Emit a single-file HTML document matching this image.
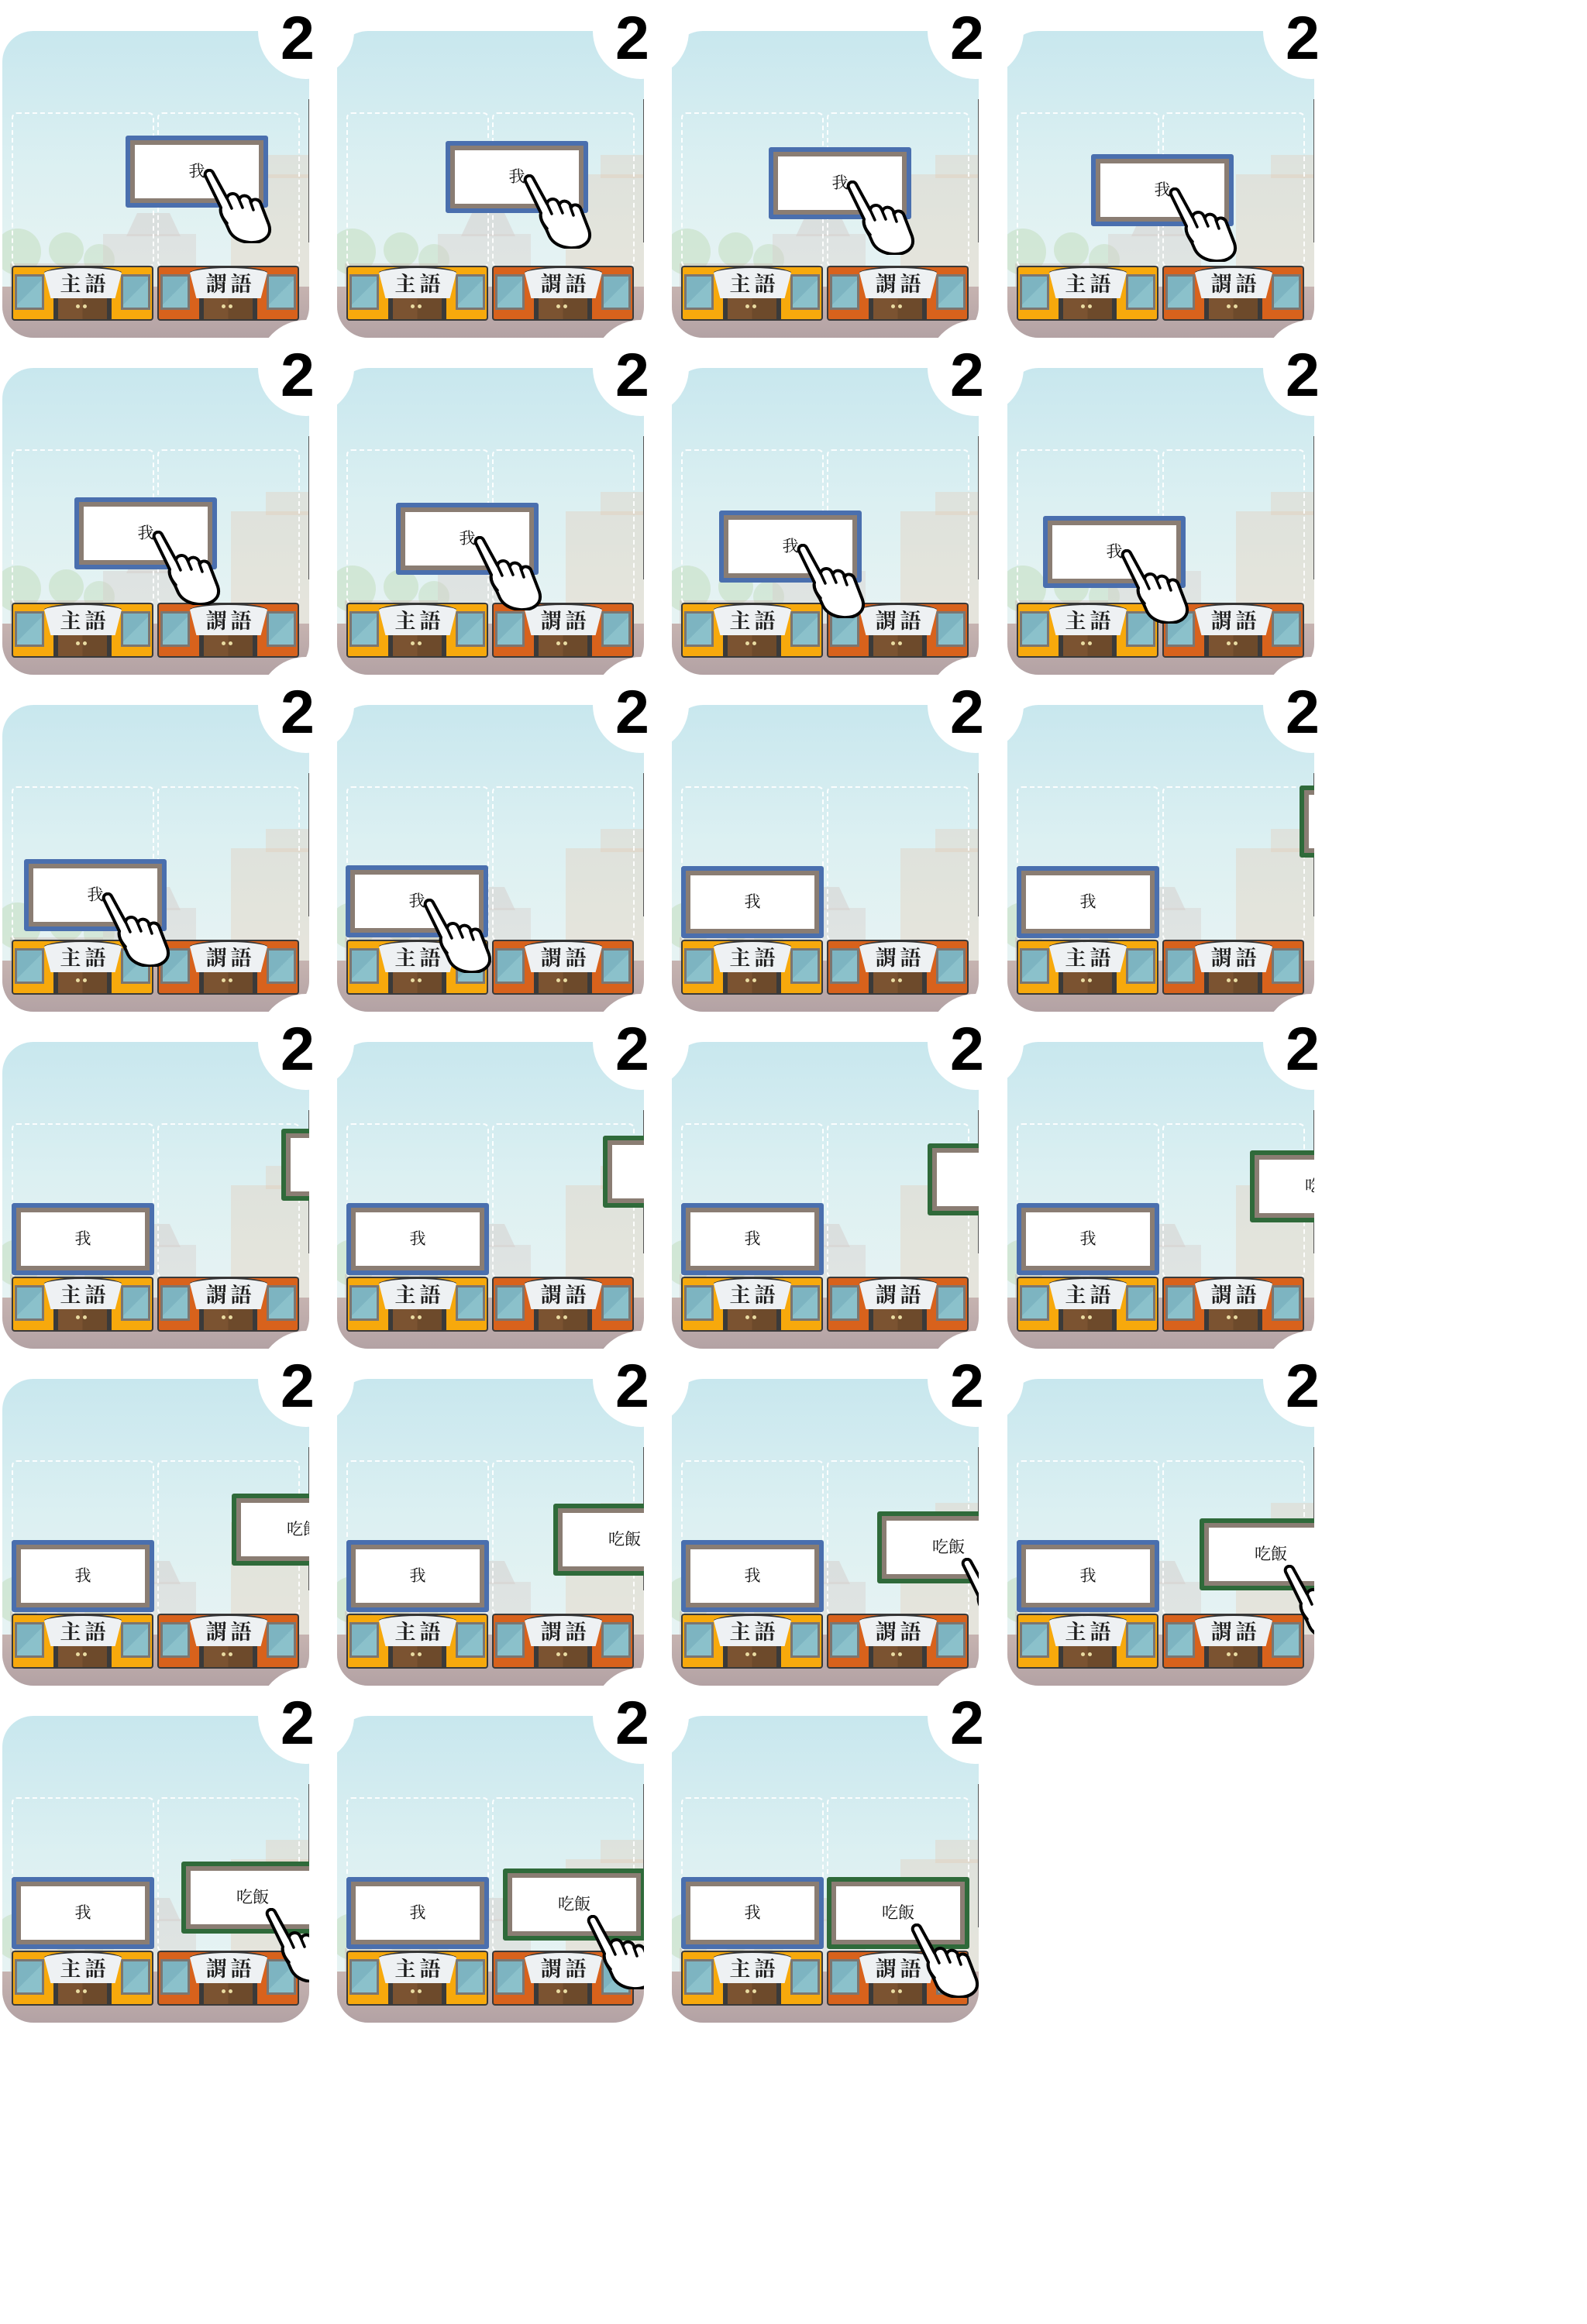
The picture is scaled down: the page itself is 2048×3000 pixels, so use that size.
<!DOCTYPE html>
<html><head><meta charset="utf-8">
<style>
html,body{margin:0;padding:0;background:#fff;width:2048px;height:3000px;overflow:hidden;position:relative}
.t{position:absolute;width:396px;height:396px;border-radius:40px;overflow:hidden;background:linear-gradient(#c8e7ee 0%,#dcf0f2 45%,#e6f3f3 80%)}
.g{position:absolute;left:0;right:0;top:330px;bottom:0;background:linear-gradient(#c6b3b0,#b3a2a4)}
.hs{position:absolute;left:0;top:0;width:396px;height:340px}
.hs i{position:absolute;display:block}
.tr1{left:-10px;top:255px;width:60px;height:60px;border-radius:50%;background:rgba(170,205,150,.3)}
.tr2{left:60px;top:260px;width:45px;height:45px;border-radius:50%;background:rgba(170,205,150,.3)}
.tr3{left:105px;top:275px;width:40px;height:40px;border-radius:50%;background:rgba(170,205,150,.28)}
.hb{left:10px;top:300px;width:120px;height:35px;background:rgba(200,175,170,.35)}
.h1{left:130px;top:262px;width:120px;height:75px;background:rgba(215,205,200,.4)}
.h2{left:160px;top:235px;width:70px;height:30px;background:rgba(205,190,185,.35);clip-path:polygon(20% 0,80% 0,100% 100%,0 100%)}
.bl{left:295px;top:185px;width:101px;height:150px;background:rgba(230,195,170,.3)}
.bl2{left:340px;top:160px;width:56px;height:30px;background:rgba(230,195,170,.28)}
.db{position:absolute;top:105px;width:180px;height:196px;border:2px dashed rgba(255,255,255,.9);border-radius:7px}
.d1{left:12px}.d2{left:200px}
.el{position:absolute;left:395px;top:88px;width:2px;height:185px;background:#555}
.bd{position:absolute;top:303px;width:183px;height:71px;border:2px solid #3a3a3a;box-sizing:border-box;border-radius:4px}
.y{left:12px;background:#f7a90c}.o{left:200px;background:#d8621c}
.w{position:absolute;top:9px;width:38px;height:46px;background:linear-gradient(135deg,#7db4c1 50%,#8bc1cb 50%);border:3px solid #7a7672;box-sizing:border-box}
.l{left:2px}.r{right:2px}
.dr{position:absolute;left:52px;width:75px;bottom:0;height:34px;background:linear-gradient(90deg,#3a3a3a 0 6px,#7b5331 6px 50%,#6d4a2b 50% 69px,#3a3a3a 69px)}
.dr::before{content:"";position:absolute;left:29px;top:15px;width:5px;height:5px;border-radius:50%;background:#e9dba2;box-shadow:9px 0 #e9dba2}
.bd b{position:absolute;left:38px;top:-1px;width:104px;height:39px;background:#eef1f3;border-top:2px solid #333;border-radius:50% 50% 0 0/10px 10px 0 0;clip-path:polygon(0 0,100% 0,90% 100%,10% 100%);font:700 27px "Liberation Serif","Noto Serif CJK TC",serif;line-height:42px;color:#1e1e1e;text-align:center;letter-spacing:5px;text-indent:5px}
.c{position:absolute;width:172px;height:81px;border:6px solid #4a6fae;box-shadow:inset 0 0 0 6px #8a7d73;background:#fff;border-radius:3px;text-align:center;font:400 21px "Liberation Serif","Noto Serif CJK TC",serif;line-height:81px;color:#111}
.c.gr{border-color:#2f6a3a}
.h{position:absolute;left:94px;top:37px;width:90px;height:96px;overflow:visible}
.gr .h{left:102px;top:54px}
.n{position:absolute;width:124px;height:124px;border-radius:50%;background:#fff}
.n span{position:absolute;left:29px;top:31px;font:700 79px/79px "Liberation Sans",sans-serif;color:#000}
</style></head><body>
<svg width="0" height="0" style="position:absolute"><defs><symbol id="hd" viewBox="0 0 90 96"><path d="M3 9 C1 2 10 -1 13 5 L31 38 C32 31 42 30 45 36 L47 39 C49 33 58 33 61 40 L62 43 C65 37 73 39 75 46 L85 72 C90 88 76 96 60 95 C47 94 38 88 34 80 L30 71 C26 64 21 57 23 50 Z" fill="#fff" stroke="#000" stroke-width="4" stroke-linejoin="round"/><path d="M31 38 L37 51 M45 36 L51 50 M61 42 L65 53 M23 50 C22 58 26 64 31 70" fill="none" stroke="#000" stroke-width="3.5" stroke-linecap="round"/></symbol></defs></svg>

<div class="t" style="left:3px;top:40px"><div class="hs"><i class="tr1"></i><i class="tr2"></i><i class="tr3"></i><i class="hb"></i><i class="h2"></i><i class="h1"></i><i class="bl2"></i><i class="bl"></i></div><div class="g"></div><div class="db d1"></div><div class="db d2"></div><div class="el"></div><div class="bd y"><i class="w l"></i><i class="w r"></i><i class="dr"></i><b>主語</b></div><div class="bd o"><i class="w l"></i><i class="w r"></i><i class="dr"></i><b>謂語</b></div><div class="c" style="left:159px;top:135px">我<svg class="h"><use href="#hd"/></svg></div></div>
<div class="t" style="left:435px;top:40px"><div class="hs"><i class="tr1"></i><i class="tr2"></i><i class="tr3"></i><i class="hb"></i><i class="h2"></i><i class="h1"></i><i class="bl2"></i><i class="bl"></i></div><div class="g"></div><div class="db d1"></div><div class="db d2"></div><div class="el"></div><div class="bd y"><i class="w l"></i><i class="w r"></i><i class="dr"></i><b>主語</b></div><div class="bd o"><i class="w l"></i><i class="w r"></i><i class="dr"></i><b>謂語</b></div><div class="c" style="left:140px;top:142px">我<svg class="h"><use href="#hd"/></svg></div></div>
<div class="t" style="left:867px;top:40px"><div class="hs"><i class="tr1"></i><i class="tr2"></i><i class="tr3"></i><i class="hb"></i><i class="h2"></i><i class="h1"></i><i class="bl2"></i><i class="bl"></i></div><div class="g"></div><div class="db d1"></div><div class="db d2"></div><div class="el"></div><div class="bd y"><i class="w l"></i><i class="w r"></i><i class="dr"></i><b>主語</b></div><div class="bd o"><i class="w l"></i><i class="w r"></i><i class="dr"></i><b>謂語</b></div><div class="c" style="left:125px;top:150px">我<svg class="h"><use href="#hd"/></svg></div></div>
<div class="t" style="left:1300px;top:40px"><div class="hs"><i class="tr1"></i><i class="tr2"></i><i class="tr3"></i><i class="hb"></i><i class="h2"></i><i class="h1"></i><i class="bl2"></i><i class="bl"></i></div><div class="g"></div><div class="db d1"></div><div class="db d2"></div><div class="el"></div><div class="bd y"><i class="w l"></i><i class="w r"></i><i class="dr"></i><b>主語</b></div><div class="bd o"><i class="w l"></i><i class="w r"></i><i class="dr"></i><b>謂語</b></div><div class="c" style="left:108px;top:159px">我<svg class="h"><use href="#hd"/></svg></div></div>

<div class="t" style="left:3px;top:475px"><div class="hs"><i class="tr1"></i><i class="tr2"></i><i class="tr3"></i><i class="hb"></i><i class="h2"></i><i class="h1"></i><i class="bl2"></i><i class="bl"></i></div><div class="g"></div><div class="db d1"></div><div class="db d2"></div><div class="el"></div><div class="bd y"><i class="w l"></i><i class="w r"></i><i class="dr"></i><b>主語</b></div><div class="bd o"><i class="w l"></i><i class="w r"></i><i class="dr"></i><b>謂語</b></div><div class="c" style="left:93px;top:167px">我<svg class="h"><use href="#hd"/></svg></div></div>
<div class="t" style="left:435px;top:475px"><div class="hs"><i class="tr1"></i><i class="tr2"></i><i class="tr3"></i><i class="hb"></i><i class="h2"></i><i class="h1"></i><i class="bl2"></i><i class="bl"></i></div><div class="g"></div><div class="db d1"></div><div class="db d2"></div><div class="el"></div><div class="bd y"><i class="w l"></i><i class="w r"></i><i class="dr"></i><b>主語</b></div><div class="bd o"><i class="w l"></i><i class="w r"></i><i class="dr"></i><b>謂語</b></div><div class="c" style="left:76px;top:174px">我<svg class="h"><use href="#hd"/></svg></div></div>
<div class="t" style="left:867px;top:475px"><div class="hs"><i class="tr1"></i><i class="tr2"></i><i class="tr3"></i><i class="hb"></i><i class="h2"></i><i class="h1"></i><i class="bl2"></i><i class="bl"></i></div><div class="g"></div><div class="db d1"></div><div class="db d2"></div><div class="el"></div><div class="bd y"><i class="w l"></i><i class="w r"></i><i class="dr"></i><b>主語</b></div><div class="bd o"><i class="w l"></i><i class="w r"></i><i class="dr"></i><b>謂語</b></div><div class="c" style="left:61px;top:184px">我<svg class="h"><use href="#hd"/></svg></div></div>
<div class="t" style="left:1300px;top:475px"><div class="hs"><i class="tr1"></i><i class="tr2"></i><i class="tr3"></i><i class="hb"></i><i class="h2"></i><i class="h1"></i><i class="bl2"></i><i class="bl"></i></div><div class="g"></div><div class="db d1"></div><div class="db d2"></div><div class="el"></div><div class="bd y"><i class="w l"></i><i class="w r"></i><i class="dr"></i><b>主語</b></div><div class="bd o"><i class="w l"></i><i class="w r"></i><i class="dr"></i><b>謂語</b></div><div class="c" style="left:46px;top:191px">我<svg class="h"><use href="#hd"/></svg></div></div>

<div class="t" style="left:3px;top:910px"><div class="hs"><i class="tr1"></i><i class="tr2"></i><i class="tr3"></i><i class="hb"></i><i class="h2"></i><i class="h1"></i><i class="bl2"></i><i class="bl"></i></div><div class="g"></div><div class="db d1"></div><div class="db d2"></div><div class="el"></div><div class="bd y"><i class="w l"></i><i class="w r"></i><i class="dr"></i><b>主語</b></div><div class="bd o"><i class="w l"></i><i class="w r"></i><i class="dr"></i><b>謂語</b></div><div class="c" style="left:28px;top:199px">我<svg class="h"><use href="#hd"/></svg></div></div>
<div class="t" style="left:435px;top:910px"><div class="hs"><i class="tr1"></i><i class="tr2"></i><i class="tr3"></i><i class="hb"></i><i class="h2"></i><i class="h1"></i><i class="bl2"></i><i class="bl"></i></div><div class="g"></div><div class="db d1"></div><div class="db d2"></div><div class="el"></div><div class="bd y"><i class="w l"></i><i class="w r"></i><i class="dr"></i><b>主語</b></div><div class="bd o"><i class="w l"></i><i class="w r"></i><i class="dr"></i><b>謂語</b></div><div class="c" style="left:11px;top:207px">我<svg class="h"><use href="#hd"/></svg></div></div>
<div class="t" style="left:867px;top:910px"><div class="hs"><i class="tr1"></i><i class="tr2"></i><i class="tr3"></i><i class="hb"></i><i class="h2"></i><i class="h1"></i><i class="bl2"></i><i class="bl"></i></div><div class="g"></div><div class="db d1"></div><div class="db d2"></div><div class="el"></div><div class="bd y"><i class="w l"></i><i class="w r"></i><i class="dr"></i><b>主語</b></div><div class="bd o"><i class="w l"></i><i class="w r"></i><i class="dr"></i><b>謂語</b></div><div class="c" style="left:12px;top:208px">我</div></div>
<div class="t" style="left:1300px;top:910px"><div class="hs"><i class="tr1"></i><i class="tr2"></i><i class="tr3"></i><i class="hb"></i><i class="h2"></i><i class="h1"></i><i class="bl2"></i><i class="bl"></i></div><div class="g"></div><div class="db d1"></div><div class="db d2"></div><div class="el"></div><div class="bd y"><i class="w l"></i><i class="w r"></i><i class="dr"></i><b>主語</b></div><div class="bd o"><i class="w l"></i><i class="w r"></i><i class="dr"></i><b>謂語</b></div><div class="c" style="left:12px;top:208px">我</div><div class="c gr" style="left:377px;top:104px">吃飯</div></div>

<div class="t" style="left:3px;top:1345px"><div class="hs"><i class="tr1"></i><i class="tr2"></i><i class="tr3"></i><i class="hb"></i><i class="h2"></i><i class="h1"></i><i class="bl2"></i><i class="bl"></i></div><div class="g"></div><div class="db d1"></div><div class="db d2"></div><div class="el"></div><div class="bd y"><i class="w l"></i><i class="w r"></i><i class="dr"></i><b>主語</b></div><div class="bd o"><i class="w l"></i><i class="w r"></i><i class="dr"></i><b>謂語</b></div><div class="c" style="left:12px;top:208px">我</div><div class="c gr" style="left:360px;top:112px">吃飯</div></div>
<div class="t" style="left:435px;top:1345px"><div class="hs"><i class="tr1"></i><i class="tr2"></i><i class="tr3"></i><i class="hb"></i><i class="h2"></i><i class="h1"></i><i class="bl2"></i><i class="bl"></i></div><div class="g"></div><div class="db d1"></div><div class="db d2"></div><div class="el"></div><div class="bd y"><i class="w l"></i><i class="w r"></i><i class="dr"></i><b>主語</b></div><div class="bd o"><i class="w l"></i><i class="w r"></i><i class="dr"></i><b>謂語</b></div><div class="c" style="left:12px;top:208px">我</div><div class="c gr" style="left:343px;top:121px">吃飯</div></div>
<div class="t" style="left:867px;top:1345px"><div class="hs"><i class="tr1"></i><i class="tr2"></i><i class="tr3"></i><i class="hb"></i><i class="h2"></i><i class="h1"></i><i class="bl2"></i><i class="bl"></i></div><div class="g"></div><div class="db d1"></div><div class="db d2"></div><div class="el"></div><div class="bd y"><i class="w l"></i><i class="w r"></i><i class="dr"></i><b>主語</b></div><div class="bd o"><i class="w l"></i><i class="w r"></i><i class="dr"></i><b>謂語</b></div><div class="c" style="left:12px;top:208px">我</div><div class="c gr" style="left:330px;top:131px">吃飯</div></div>
<div class="t" style="left:1300px;top:1345px"><div class="hs"><i class="tr1"></i><i class="tr2"></i><i class="tr3"></i><i class="hb"></i><i class="h2"></i><i class="h1"></i><i class="bl2"></i><i class="bl"></i></div><div class="g"></div><div class="db d1"></div><div class="db d2"></div><div class="el"></div><div class="bd y"><i class="w l"></i><i class="w r"></i><i class="dr"></i><b>主語</b></div><div class="bd o"><i class="w l"></i><i class="w r"></i><i class="dr"></i><b>謂語</b></div><div class="c" style="left:12px;top:208px">我</div><div class="c gr" style="left:313px;top:140px">吃飯</div></div>

<div class="t" style="left:3px;top:1780px"><div class="hs"><i class="tr1"></i><i class="tr2"></i><i class="tr3"></i><i class="hb"></i><i class="h2"></i><i class="h1"></i><i class="bl2"></i><i class="bl"></i></div><div class="g"></div><div class="db d1"></div><div class="db d2"></div><div class="el"></div><div class="bd y"><i class="w l"></i><i class="w r"></i><i class="dr"></i><b>主語</b></div><div class="bd o"><i class="w l"></i><i class="w r"></i><i class="dr"></i><b>謂語</b></div><div class="c" style="left:12px;top:208px">我</div><div class="c gr" style="left:296px;top:148px">吃飯</div></div>
<div class="t" style="left:435px;top:1780px"><div class="hs"><i class="tr1"></i><i class="tr2"></i><i class="tr3"></i><i class="hb"></i><i class="h2"></i><i class="h1"></i><i class="bl2"></i><i class="bl"></i></div><div class="g"></div><div class="db d1"></div><div class="db d2"></div><div class="el"></div><div class="bd y"><i class="w l"></i><i class="w r"></i><i class="dr"></i><b>主語</b></div><div class="bd o"><i class="w l"></i><i class="w r"></i><i class="dr"></i><b>謂語</b></div><div class="c" style="left:12px;top:208px">我</div><div class="c gr" style="left:279px;top:161px">吃飯</div></div>
<div class="t" style="left:867px;top:1780px"><div class="hs"><i class="tr1"></i><i class="tr2"></i><i class="tr3"></i><i class="hb"></i><i class="h2"></i><i class="h1"></i><i class="bl2"></i><i class="bl"></i></div><div class="g"></div><div class="db d1"></div><div class="db d2"></div><div class="el"></div><div class="bd y"><i class="w l"></i><i class="w r"></i><i class="dr"></i><b>主語</b></div><div class="bd o"><i class="w l"></i><i class="w r"></i><i class="dr"></i><b>謂語</b></div><div class="c" style="left:12px;top:208px">我</div><div class="c gr" style="left:265px;top:171px">吃飯<svg class="h"><use href="#hd"/></svg></div></div>
<div class="t" style="left:1300px;top:1780px"><div class="hs"><i class="tr1"></i><i class="tr2"></i><i class="tr3"></i><i class="hb"></i><i class="h2"></i><i class="h1"></i><i class="bl2"></i><i class="bl"></i></div><div class="g"></div><div class="db d1"></div><div class="db d2"></div><div class="el"></div><div class="bd y"><i class="w l"></i><i class="w r"></i><i class="dr"></i><b>主語</b></div><div class="bd o"><i class="w l"></i><i class="w r"></i><i class="dr"></i><b>謂語</b></div><div class="c" style="left:12px;top:208px">我</div><div class="c gr" style="left:248px;top:180px">吃飯<svg class="h"><use href="#hd"/></svg></div></div>

<div class="t" style="left:3px;top:2215px"><div class="hs"><i class="tr1"></i><i class="tr2"></i><i class="tr3"></i><i class="hb"></i><i class="h2"></i><i class="h1"></i><i class="bl2"></i><i class="bl"></i></div><div class="g"></div><div class="db d1"></div><div class="db d2"></div><div class="el"></div><div class="bd y"><i class="w l"></i><i class="w r"></i><i class="dr"></i><b>主語</b></div><div class="bd o"><i class="w l"></i><i class="w r"></i><i class="dr"></i><b>謂語</b></div><div class="c" style="left:12px;top:208px">我</div><div class="c gr" style="left:231px;top:188px">吃飯<svg class="h"><use href="#hd"/></svg></div></div>
<div class="t" style="left:435px;top:2215px"><div class="hs"><i class="tr1"></i><i class="tr2"></i><i class="tr3"></i><i class="hb"></i><i class="h2"></i><i class="h1"></i><i class="bl2"></i><i class="bl"></i></div><div class="g"></div><div class="db d1"></div><div class="db d2"></div><div class="el"></div><div class="bd y"><i class="w l"></i><i class="w r"></i><i class="dr"></i><b>主語</b></div><div class="bd o"><i class="w l"></i><i class="w r"></i><i class="dr"></i><b>謂語</b></div><div class="c" style="left:12px;top:208px">我</div><div class="c gr" style="left:214px;top:197px">吃飯<svg class="h"><use href="#hd"/></svg></div></div>
<div class="t" style="left:867px;top:2215px"><div class="hs"><i class="tr1"></i><i class="tr2"></i><i class="tr3"></i><i class="hb"></i><i class="h2"></i><i class="h1"></i><i class="bl2"></i><i class="bl"></i></div><div class="g"></div><div class="db d1"></div><div class="db d2"></div><div class="el"></div><div class="bd y"><i class="w l"></i><i class="w r"></i><i class="dr"></i><b>主語</b></div><div class="bd o"><i class="w l"></i><i class="w r"></i><i class="dr"></i><b>謂語</b></div><div class="c" style="left:12px;top:208px">我</div><div class="c gr" style="left:200px;top:208px">吃飯<svg class="h"><use href="#hd"/></svg></div></div>

<div class="n" style="left:333px;top:-22px"><span>2</span></div>
<div class="n" style="left:765px;top:-22px"><span>2</span></div>
<div class="n" style="left:1197px;top:-22px"><span>2</span></div>
<div class="n" style="left:1630px;top:-22px"><span>2</span></div>
<div class="n" style="left:333px;top:413px"><span>2</span></div>
<div class="n" style="left:765px;top:413px"><span>2</span></div>
<div class="n" style="left:1197px;top:413px"><span>2</span></div>
<div class="n" style="left:1630px;top:413px"><span>2</span></div>
<div class="n" style="left:333px;top:848px"><span>2</span></div>
<div class="n" style="left:765px;top:848px"><span>2</span></div>
<div class="n" style="left:1197px;top:848px"><span>2</span></div>
<div class="n" style="left:1630px;top:848px"><span>2</span></div>
<div class="n" style="left:333px;top:1283px"><span>2</span></div>
<div class="n" style="left:765px;top:1283px"><span>2</span></div>
<div class="n" style="left:1197px;top:1283px"><span>2</span></div>
<div class="n" style="left:1630px;top:1283px"><span>2</span></div>
<div class="n" style="left:333px;top:1718px"><span>2</span></div>
<div class="n" style="left:765px;top:1718px"><span>2</span></div>
<div class="n" style="left:1197px;top:1718px"><span>2</span></div>
<div class="n" style="left:1630px;top:1718px"><span>2</span></div>
<div class="n" style="left:333px;top:2153px"><span>2</span></div>
<div class="n" style="left:765px;top:2153px"><span>2</span></div>
<div class="n" style="left:1197px;top:2153px"><span>2</span></div>
</body></html>
